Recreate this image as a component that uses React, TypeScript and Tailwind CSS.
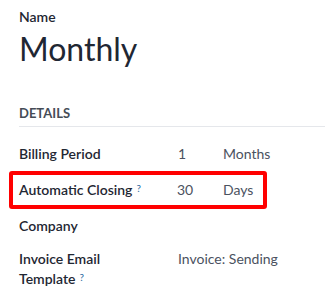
import React from 'react';

const Help = () => (
  <sup className="ml-[4px] text-[10px] font-normal text-[#2c6aa0] relative top-[-3px]">?</sup>
);

const rows = [
  { label: 'Billing Period', value: '1', unit: 'Months' },
];

const App: React.FC = () => {
  return (
    <div
      className="w-[325px] h-[301px] bg-white overflow-hidden pl-[19px] pt-[8px] text-[#1f2733]"
      style={{ fontFamily: 'Lato, "Open Sans", sans-serif' }}
    >
      <div className="text-[14px] font-semibold leading-[18px]">Name</div>
      <div className="text-[32px] leading-[42px] mt-[2px]">Monthly</div>

      <div className="mt-[35px] text-[13px] font-bold text-[#454c56] leading-[16px] pb-[5px] border-b border-[#e5e7eb]">
        DETAILS
      </div>

      <div className="mt-[9px] flex flex-col text-[14px] leading-[20px]">
        {rows.map((r) => (
          <div key={r.label} className="flex h-[35px] items-center">
            <div className="w-[159px] font-semibold">{r.label}</div>
            <div className="w-[45px] text-[#4b5260]">{r.value}</div>
            <div className="text-[#4b5260]">{r.unit}</div>
          </div>
        ))}

        <div className="flex h-[38px] items-center ml-[-10px] w-[258px] border-4 border-[#ff0000] rounded-[3px] pl-[6px]">
          <div className="w-[158px] font-semibold">
            Automatic Closing
            <Help />
          </div>
          <div className="w-[46px] text-[#4b5260]">30</div>
          <div className="text-[#4b5260]">Days</div>
        </div>

        <div className="flex h-[34px] items-center">
          <div className="w-[159px] font-semibold">Company</div>
        </div>

        <div className="flex items-start pt-[6px] leading-[20px]">
          <div className="w-[159px] font-semibold">
            Invoice Email
            <br />
            Template
            <Help />
          </div>
          <div className="text-[#4b5260]">Invoice: Sending</div>
        </div>
      </div>
    </div>
  );
};

export default App;
